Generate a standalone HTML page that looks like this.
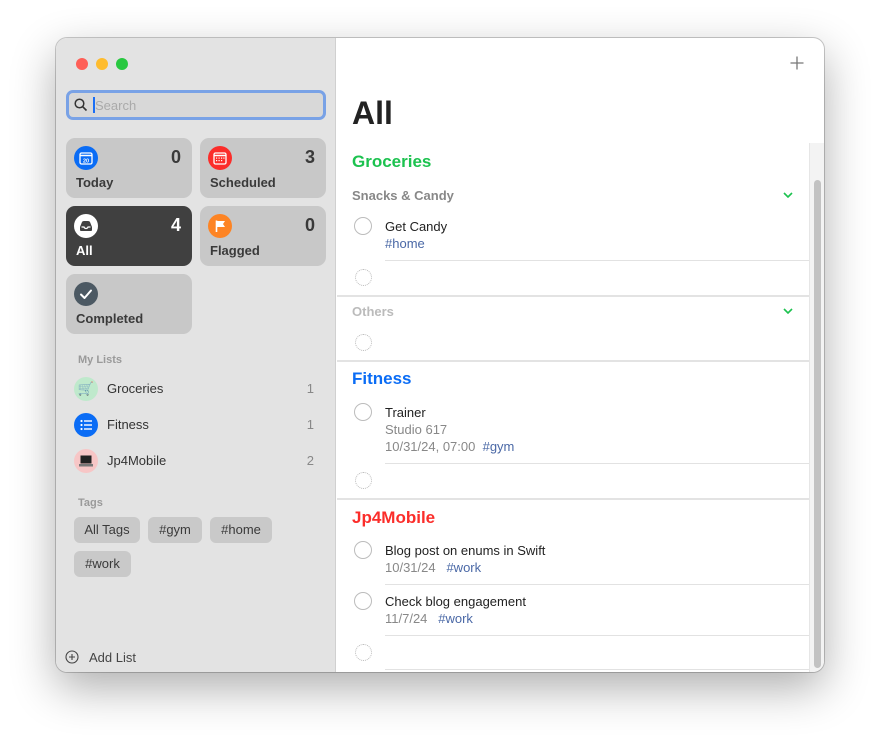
<!DOCTYPE html>
<html><head><meta charset="utf-8"><style>
*{margin:0;padding:0;box-sizing:border-box}
body{width:880px;height:747px;background:#fff;font-family:"Liberation Sans",sans-serif;position:relative;overflow:hidden}
.win{position:absolute;left:56px;top:38px;width:768px;height:634px;border-radius:11px;overflow:hidden;box-shadow:0 16px 45px rgba(0,0,0,.32),0 0 0 1px rgba(0,0,0,.2);background:#fff}
.side{position:absolute;left:0;top:0;width:280px;height:634px;background:#e3e3e3;border-right:1px solid #d0d0d0}
.a{position:absolute}
.dot{position:absolute;top:20px;width:12px;height:12px;border-radius:50%}
.card{position:absolute;width:126px;height:60px;border-radius:9px;background:#c8c8c8}
.card .ic{position:absolute;left:8px;top:8px;width:24px;height:24px;border-radius:50%}
.card .n{position:absolute;right:11px;top:9px;font-size:18px;font-weight:bold;color:#3a3a3a}
.card .l{position:absolute;left:10px;top:37px;font-size:13px;font-weight:bold;color:#3a3a3a}
.hd{position:absolute;left:22px;font-size:11px;font-weight:bold;color:#9a9a9a}
.li{position:absolute;left:18px;width:240px;height:24px}
.li .c{position:absolute;left:0;top:0;width:24px;height:24px;border-radius:50%}
.li .t{position:absolute;left:33px;top:4px;font-size:13px;color:#333}
.li .k{position:absolute;right:0;top:4px;font-size:13px;color:#888}
.tag{position:absolute;height:26px;border-radius:6px;background:#c9c9c9;font-size:13px;color:#3a3a3a;line-height:26px;text-align:center}
.main{position:absolute;left:281px;top:0;width:487px;height:634px}
.sec{position:absolute;left:15px;font-size:17px;font-weight:bold}
.sub{position:absolute;left:15px;font-size:13px;font-weight:bold}
.cb{position:absolute;left:17px;width:18px;height:18px;border-radius:50%;border:1.5px solid #bcbcbc}
.cbd{position:absolute;left:18px;width:17px;height:17px;border-radius:50%;border:1px dotted #bbb}
.tt{position:absolute;left:48px;font-size:13px;color:#222}
.mt{position:absolute;left:48px;font-size:13px;color:#888}
.hash{color:#4a68a6}
.hl{position:absolute;left:48px;right:15px;height:1px;background:#e2e2e2}
.fl{position:absolute;left:0;right:15px;height:2px;background:#e3e3e3}
.chev{position:absolute;left:446px;width:10px;height:6px}
</style></head><body>
<div class="win">
 <div class="side">
  <div class="dot" style="left:20px;background:#fe5f57"></div>
  <div class="dot" style="left:40px;background:#febc2e"></div>
  <div class="dot" style="left:60px;background:#28c840"></div>
  <div class="a" style="left:10px;top:52px;width:260px;height:30px;border-radius:7px;border:3px solid #79a2e6;background:#d8d8d8"></div>
  <svg class="a" style="left:18px;top:60px" width="14" height="14" viewBox="0 0 14 14"><circle cx="5.5" cy="5.5" r="4.3" fill="none" stroke="#333" stroke-width="1.5"/><line x1="8.7" y1="8.7" x2="12.5" y2="12.5" stroke="#333" stroke-width="1.6"/></svg>
  <div class="a" style="left:37px;top:59px;width:2px;height:16px;background:#1a6ef5"></div>
  <div class="a" style="left:39px;top:60px;font-size:13px;color:#aaa">Search</div>

  <div class="card" style="left:10px;top:100px"><div class="ic" style="background:#0a6cf5"><svg width="24" height="24"><rect x="6" y="7" width="12" height="11" rx="1.5" fill="none" stroke="#fff" stroke-width="1.3"/><line x1="6" y1="9.5" x2="18" y2="9.5" stroke="#fff" stroke-width="1.5"/><text x="12" y="16.5" font-size="5.5" fill="#fff" text-anchor="middle" font-family="Liberation Sans" font-weight="bold">20</text></svg></div><div class="n">0</div><div class="l">Today</div></div>
  <div class="card" style="left:144px;top:100px"><div class="ic" style="background:#fb2d2a"><svg width="24" height="24"><rect x="6" y="7" width="12" height="11" rx="1.5" fill="none" stroke="#fff" stroke-width="1.3"/><line x1="6" y1="9.5" x2="18" y2="9.5" stroke="#fff" stroke-width="1.5"/><g fill="#fff"><rect x="8" y="11.5" width="1.2" height="1.2"/><rect x="10.5" y="11.5" width="1.2" height="1.2"/><rect x="13" y="11.5" width="1.2" height="1.2"/><rect x="15.3" y="11.5" width="1.2" height="1.2"/><rect x="8" y="14" width="1.2" height="1.2"/><rect x="10.5" y="14" width="1.2" height="1.2"/><rect x="13" y="14" width="1.2" height="1.2"/></g></svg></div><div class="n">3</div><div class="l">Scheduled</div></div>
  <div class="card" style="left:10px;top:168px;background:#404040"><div class="ic" style="background:#fff"><svg width="24" height="24"><path d="M6 13 L8 8 Q8.5 7 10 7 L14 7 Q15.5 7 16 8 L18 13 L18 16 Q18 17 17 17 L7 17 Q6 17 6 16 Z" fill="#404040"/><path d="M7.5 13 L10 13 Q10.5 14.5 12 14.5 Q13.5 14.5 14 13 L16.5 13" fill="none" stroke="#fff" stroke-width="1.2"/></svg></div><div class="n" style="color:#fff">4</div><div class="l" style="color:#fff">All</div></div>
  <div class="card" style="left:144px;top:168px"><div class="ic" style="background:#fd8424"><svg width="24" height="24"><line x1="8.5" y1="6.5" x2="8.5" y2="18" stroke="#fff" stroke-width="1.6"/><path d="M9 7 L17 7 L15 10 L17 13 L9 13 Z" fill="#fff"/></svg></div><div class="n">0</div><div class="l">Flagged</div></div>
  <div class="card" style="left:10px;top:236px"><div class="ic" style="background:#4c5963"><svg width="24" height="24"><path d="M7 12.5 L10.5 16 L17 8.5" fill="none" stroke="#fff" stroke-width="2" stroke-linecap="round" stroke-linejoin="round"/></svg></div><div class="l">Completed</div></div>

  <div class="hd" style="top:316px">My Lists</div>
  <div class="li" style="top:339px"><div class="c" style="background:#bfe9cc;text-align:center;font-size:13px;line-height:24px">🛒</div><div class="t">Groceries</div><div class="k">1</div></div>
  <div class="li" style="top:375px"><div class="c" style="background:#0a6cf5"><svg width="24" height="24"><g fill="#fff"><circle cx="7.5" cy="8" r="1.1"/><circle cx="7.5" cy="12" r="1.1"/><circle cx="7.5" cy="16" r="1.1"/><rect x="10" y="7.3" width="8" height="1.4"/><rect x="10" y="11.3" width="8" height="1.4"/><rect x="10" y="15.3" width="8" height="1.4"/></g></svg></div><div class="t">Fitness</div><div class="k">1</div></div>
  <div class="li" style="top:411px"><div class="c" style="background:#f7c6c6"><svg width="24" height="24"><rect x="6.5" y="6.5" width="11" height="8" fill="#222"/><rect x="5" y="15" width="14" height="2.5" fill="#777"/></svg></div><div class="t">Jp4Mobile</div><div class="k">2</div></div>

  <div class="hd" style="top:459px">Tags</div>
  <div class="tag" style="left:18px;top:479px;width:66px">All Tags</div>
  <div class="tag" style="left:92px;top:479px;width:54px">#gym</div>
  <div class="tag" style="left:154px;top:479px;width:62px">#home</div>
  <div class="tag" style="left:18px;top:513px;width:57px">#work</div>

  <svg class="a" style="left:9px;top:612px" width="14" height="14"><circle cx="7" cy="7" r="6" fill="none" stroke="#444" stroke-width="1.1"/><path d="M7 4 V10 M4 7 H10" stroke="#444" stroke-width="1.1"/></svg>
  <div class="a" style="left:33px;top:612px;font-size:13px;color:#444">Add List</div>
 </div>

 <div class="main">
  <svg class="a" style="left:453px;top:18px" width="14" height="14"><path d="M7 0.5 V13.5 M0.5 7 H13.5" stroke="#777" stroke-width="1.3"/></svg>
  <div class="a" style="left:15px;top:57px;font-size:32px;font-weight:bold;color:#222">All</div>
  <div class="a" style="left:472px;top:105px;width:15px;height:529px;background:#f3f3f3;border-left:1px solid #e6e6e6"></div>
  <div class="a" style="left:477px;top:142px;width:7px;height:488px;border-radius:4px;background:#c2c2c2"></div>

  <div class="sec" style="top:114px;color:#1cc24f">Groceries</div>
  <div class="sub" style="top:150px;color:#888">Snacks &amp; Candy</div>
  <svg class="chev" style="top:154px" viewBox="0 0 10 6"><path d="M1 1 L5 5 L9 1" fill="none" stroke="#1cc24f" stroke-width="1.6"/></svg>
  <div class="cb" style="top:179px"></div>
  <div class="tt" style="top:181px">Get Candy</div>
  <div class="mt hash" style="top:198px">#home</div>
  <div class="hl" style="top:222px"></div>
  <div class="cbd" style="top:231px"></div>
  <div class="fl" style="top:257px"></div>
  <div class="sub" style="top:266px;color:#bbb">Others</div>
  <svg class="chev" style="top:270px" viewBox="0 0 10 6"><path d="M1 1 L5 5 L9 1" fill="none" stroke="#1cc24f" stroke-width="1.6"/></svg>
  <div class="cbd" style="top:296px"></div>
  <div class="fl" style="top:322px"></div>

  <div class="sec" style="top:331px;color:#0a6cf5">Fitness</div>
  <div class="cb" style="top:365px"></div>
  <div class="tt" style="top:367px">Trainer</div>
  <div class="mt" style="top:384px">Studio 617</div>
  <div class="mt" style="top:401px">10/31/24, 07:00 &nbsp;<span class="hash">#gym</span></div>
  <div class="hl" style="top:425px"></div>
  <div class="cbd" style="top:434px"></div>
  <div class="fl" style="top:460px"></div>

  <div class="sec" style="top:470px;color:#fb2d2a">Jp4Mobile</div>
  <div class="cb" style="top:503px"></div>
  <div class="tt" style="top:505px">Blog post on enums in Swift</div>
  <div class="mt" style="top:522px">10/31/24 &nbsp;&nbsp;<span class="hash">#work</span></div>
  <div class="hl" style="top:546px"></div>
  <div class="cb" style="top:554px"></div>
  <div class="tt" style="top:556px">Check blog engagement</div>
  <div class="mt" style="top:573px">11/7/24 &nbsp;&nbsp;<span class="hash">#work</span></div>
  <div class="hl" style="top:597px"></div>
  <div class="cbd" style="top:606px"></div>
  <div class="hl" style="top:631px"></div>
 </div>
</div>
</body></html>
